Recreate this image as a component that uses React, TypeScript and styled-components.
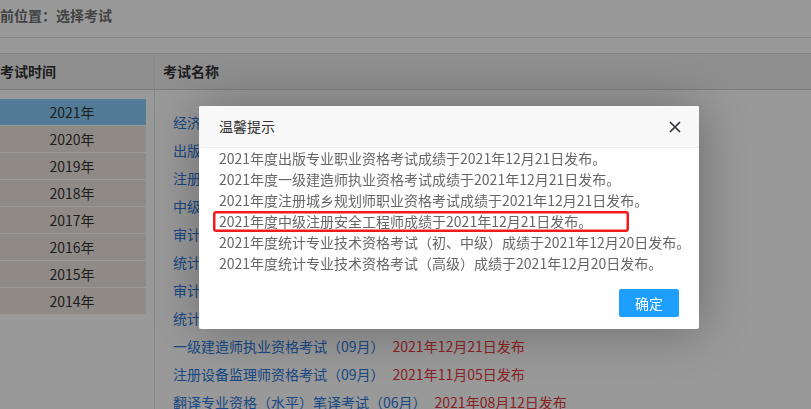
import styled, { createGlobalStyle } from 'styled-components'

const GlobalStyle = createGlobalStyle`
  html, body {
    margin: 0;
    padding: 0;
    background: #fff;
    overflow: hidden;
  }
  * {
    box-sizing: border-box;
  }
  body {
    font-family: "Microsoft YaHei", "Noto Sans CJK SC", sans-serif;
    font-size: 14px;
  }
`

const years = ['2021', '2020', '2019', '2018', '2017', '2016', '2015', '2014']

const exams = [
  { name: '经济专业技术资格考试（10月）', date: '2021年12月24日发布' },
  { name: '出版专业职业资格考试（10月）', date: '2021年12月21日发布' },
  { name: '注册城乡规划师职业资格考试（09月）', date: '2021年12月21日发布' },
  { name: '中级注册安全工程师职业资格考试（10月）', date: '2021年12月21日发布' },
  { name: '审计专业技术资格考试（10月）', date: '2021年12月20日发布' },
  { name: '统计专业技术资格考试（初、中级）', date: '2021年12月20日发布' },
  { name: '审计专业技术资格考试（高级）', date: '2021年12月20日发布' },
  { name: '统计专业技术资格考试（高级）', date: '2021年12月20日发布' },
  { name: '一级建造师执业资格考试（09月）', date: '2021年12月21日发布' },
  { name: '注册设备监理师资格考试（09月）', date: '2021年11月05日发布' },
  { name: '翻译专业资格（水平）笔译考试（06月）', date: '2021年08月12日发布' },
]

const notices = [
  '2021年度出版专业职业资格考试成绩于2021年12月21日发布。',
  '2021年度一级建造师执业资格考试成绩于2021年12月21日发布。',
  '2021年度注册城乡规划师职业资格考试成绩于2021年12月21日发布。',
  '2021年度中级注册安全工程师成绩于2021年12月21日发布。',
  '2021年度统计专业技术资格考试（初、中级）成绩于2021年12月20日发布。',
  '2021年度统计专业技术资格考试（高级）成绩于2021年12月20日发布。',
]

export default function App() {
  return (
    <>
      <GlobalStyle />
      <Page>
        <Breadcrumb>当前位置：选择考试</Breadcrumb>
        <Spacer />
        <TableHead>
          <HeadCell $first>考试时间</HeadCell>
          <HeadCell>考试名称</HeadCell>
        </TableHead>
        <TableBody>
          <YearColumn>
            {years.map((y, i) => (
              <YearItem key={y} $active={i === 0}>{y}年</YearItem>
            ))}
          </YearColumn>
          <ExamColumn>
            {exams.map(e => (
              <ExamRow key={e.name}>
                <ExamLink>{e.name}</ExamLink>
                <ExamDate>{e.date}</ExamDate>
              </ExamRow>
            ))}
          </ExamColumn>
        </TableBody>
      </Page>

      <Shade />

      <Dialog>
        <DialogTitle>
          温馨提示
          <CloseButton>
            <svg width="12" height="12" viewBox="0 0 12 12">
              <path d="M1 1 L11 11 M11 1 L1 11" stroke="#2b2b36" strokeWidth="1.6" fill="none" />
            </svg>
          </CloseButton>
        </DialogTitle>
        <DialogBody>
          {notices.map((n, i) => (
            <NoticeLine key={i} $marked={i === 3}>{n}</NoticeLine>
          ))}
        </DialogBody>
        <DialogFooter>
          <ConfirmButton>确定</ConfirmButton>
        </DialogFooter>
      </Dialog>
    </>
  )
}

const Page = styled.div`
  margin-left: -14px;
  width: 825px;
  min-height: 409px;
  display: flex;
  flex-direction: column;

  & > * {
    flex-shrink: 0;
  }
`

const Breadcrumb = styled.div`
  height: 38px;
  line-height: 30px;
  font-weight: bold;
  color: #707070;
  border-bottom: 1px solid #dcdcdc;
`

const Spacer = styled.div`
  height: 16px;
  border-bottom: 1px solid #dcdcdc;
`

const TableHead = styled.div`
  display: grid;
  grid-template-columns: 169px 1fr;
  height: 36px;
  background: #efefef;
  border-bottom: 1px solid #d0d0d0;
`

const HeadCell = styled.div<{ $first?: boolean }>`
  line-height: 35px;
  font-weight: bold;
  color: #333;
  padding-left: ${({ $first }) => ($first ? '14px' : '8px')};
  ${({ $first }) => $first && 'border-right: 1px solid #e2e2e2;'}
`

const TableBody = styled.div`
  flex: 1 0 auto;
  display: grid;
  grid-template-columns: 169px 1fr;
`

const YearColumn = styled.div`
  padding: 9px 8px 0 12px;
  border-right: 1px solid #e2e2e2;
  display: flex;
  flex-direction: column;
  gap: 1px;
`

const YearItem = styled.div<{ $active?: boolean }>`
  height: 26px;
  line-height: 26px;
  text-align: center;
  color: #333;
  background: ${({ $active }) => ($active ? '#87cefa' : '#efe7e0')};
`

const ExamColumn = styled.div`
  padding: 18px 0 0 18px;
`

const ExamRow = styled.div`
  height: 28px;
  line-height: 28px;
  white-space: nowrap;
`

const ExamLink = styled.span`
  color: #2a78dc;
`

const ExamDate = styled.span`
  color: #e4393c;
  margin-left: 8px;
`

const Shade = styled.div`
  position: fixed;
  inset: 0;
  background: rgba(0, 0, 0, 0.4);
`

const Dialog = styled.div`
  position: fixed;
  left: 199px;
  top: 106px;
  width: 500px;
  background: #fff;
  border-radius: 2px;
  box-shadow: 1px 1px 50px rgba(0, 0, 0, 0.3);
  display: flex;
  flex-direction: column;
`

const DialogTitle = styled.div`
  height: 42px;
  line-height: 41px;
  padding: 0 18px 0 20px;
  background: #f8f8f8;
  border-bottom: 1px solid #eee;
  color: #333;
  display: flex;
  align-items: center;
  justify-content: space-between;
  border-radius: 2px 2px 0 0;
`

const CloseButton = styled.span`
  display: flex;
  width: 12px;
  height: 12px;
  cursor: pointer;
`

const DialogBody = styled.div`
  padding: 0 20px;
  color: #666;
`

const NoticeLine = styled.div<{ $marked?: boolean }>`
  height: 21px;
  line-height: 21px;
  white-space: nowrap;
  ${({ $marked }) => $marked && `
    margin-left: -6px;
    padding-left: 6px;
    width: 416px;
    border-radius: 3px;
    box-shadow: inset 0 0 0 2.5px #f21b1b;
  `}
`

const DialogFooter = styled.div`
  display: flex;
  justify-content: flex-end;
  padding: 15px 20px 12px;
`

const ConfirmButton = styled.button`
  height: 28px;
  padding: 0 16px;
  border: none;
  border-radius: 2px;
  background: #1e9fff;
  color: #fff;
  font-family: inherit;
  font-size: 14px;
  line-height: 28px;
`
